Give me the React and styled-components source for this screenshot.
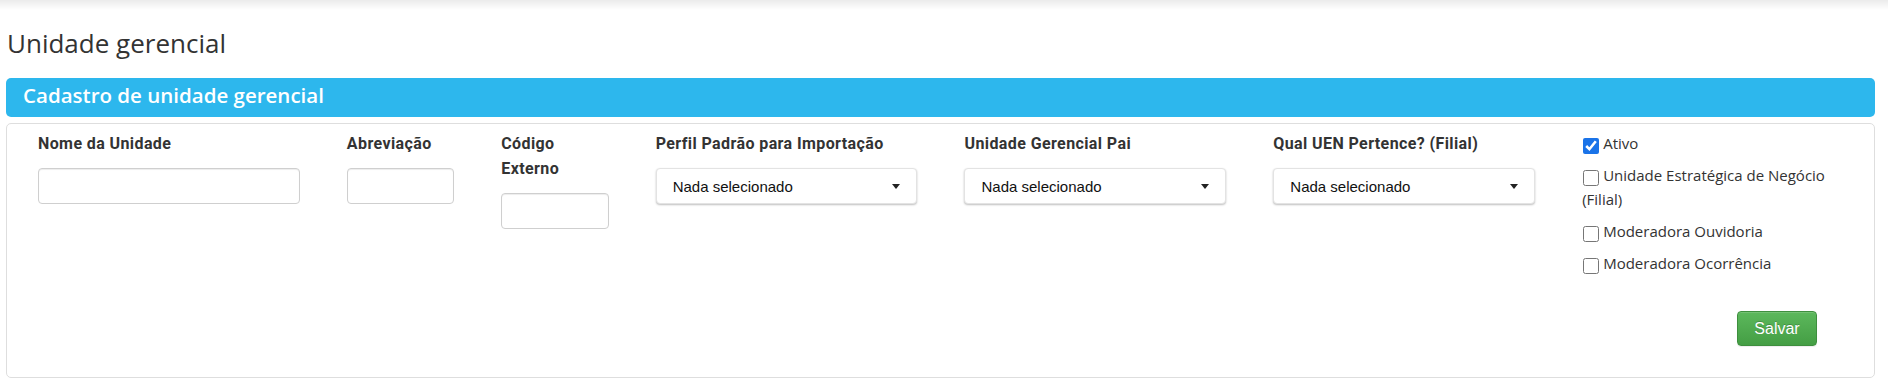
import React, { useState } from 'react';
import styled, { createGlobalStyle } from 'styled-components';

const GlobalStyle = createGlobalStyle`
  html, body {
    margin: 0;
    padding: 0;
    background: #ffffff;
  }
  body {
    font-family: "Open Sans", "Liberation Sans", sans-serif;
    color: #333;
  }
  * {
    box-sizing: border-box;
  }
`;

const TopShade = styled.div`
  height: 10px;
  background: linear-gradient(#ebebeb, #ffffff);
`;

const Page = styled.main`
  padding: 0 13px 0 6px;
`;

const PageTitle = styled.h1`
  margin: 15px 0 17px;
  padding-left: 1px;
  font-family: "Open Sans", sans-serif;
  font-weight: 400;
  font-size: 26px;
  line-height: 36px;
  color: #333;
`;

const PanelHeading = styled.div`
  height: 39px;
  padding: 0 0 4px 17px;
  background: #2db7ed;
  border-radius: 5px;
  color: #fff;
  font-family: "Open Sans", sans-serif;
  font-weight: 600;
  font-size: 20.5px;
  line-height: 35px;
`;

const Panel = styled.form`
  margin-top: 6px;
  border: 1px solid #dedede;
  border-radius: 5px;
  padding: 7px 30px 30px 31px;
  height: 255px;
`;

const FieldGrid = styled.div`
  display: grid;
  grid-template-columns: repeat(12, 1fr);
  column-gap: 47px;
  align-items: start;
`;

const Field = styled.div`
  grid-column: span ${p => p.span || 1};
  display: flex;
  flex-direction: column;
`;

const Label = styled.label`
  font-family: Roboto, "Liberation Sans", sans-serif;
  font-weight: 700;
  font-size: 16px;
  letter-spacing: 0.4px;
  line-height: 25px;
  color: #333;
  margin-bottom: 12px;
`;

const TextInput = styled.input`
  width: 100%;
  height: 36px;
  border: 1px solid #cfcfcf;
  border-radius: 4px;
  box-shadow: inset 0 1px 1px rgba(0, 0, 0, 0.075);
  padding: 6px 12px;
  font-size: 14px;
  outline: none;
`;

const SelectButton = styled.button`
  width: 100%;
  height: 36px;
  display: flex;
  align-items: center;
  justify-content: space-between;
  padding: 0 16px;
  background: #fff;
  border: 1px solid #e3e3e3;
  border-radius: 4px;
  box-shadow: 0 1px 2px rgba(0, 0, 0, 0.25);
  font-family: "Liberation Sans", Arial, sans-serif;
  font-size: 15px;
  color: #111;
  cursor: pointer;
`;

const Caret = styled.span`
  width: 0;
  height: 0;
  border-top: 5px solid #222;
  border-left: 4.5px solid transparent;
  border-right: 4.5px solid transparent;
`;

const CheckColumn = styled.div`
  grid-column: span 2;
  display: flex;
  flex-direction: column;
  gap: 8px;
`;

const CheckLabel = styled.label`
  display: block;
  font-family: "Open Sans", sans-serif;
  font-size: 15px;
  line-height: 24px;
  color: #333;
`;

const CheckBox = styled.input`
  width: 16px;
  height: 16px;
  margin: 7px 4px 0 1px;
  vertical-align: top;
  accent-color: #1a73e8;
`;

const Footer = styled.div`
  display: flex;
  justify-content: flex-end;
  padding-right: 27px;
  margin-top: 36px;
`;

const SaveButton = styled.button`
  width: 80px;
  height: 35px;
  border: 1px solid #3e8f3e;
  border-radius: 4px;
  background: linear-gradient(#5cb85c, #449e44);
  box-shadow: inset 0 1px 0 rgba(255, 255, 255, 0.15), 0 1px 1px rgba(0, 0, 0, 0.075);
  color: #fff;
  font-family: "Liberation Sans", Arial, sans-serif;
  font-size: 16px;
  text-shadow: 0 -1px 0 rgba(0, 0, 0, 0.2);
  cursor: pointer;
`;

const Select = ({ value }) => (
  <SelectButton type="button">
    <span>{value}</span>
    <Caret />
  </SelectButton>
);

const flags = [
  { id: 'ativo', text: 'Ativo', checked: true },
  { id: 'uen', text: 'Unidade Estratégica de Negócio (Filial)' },
  { id: 'ouvidoria', text: 'Moderadora Ouvidoria' },
  { id: 'ocorrencia', text: 'Moderadora Ocorrência' }
];

const App = () => {
  const [checks, setChecks] = useState(
    flags.reduce((acc, f) => ({ ...acc, [f.id]: !!f.checked }), {})
  );

  const toggle = (id) => setChecks(prev => ({ ...prev, [id]: !prev[id] }));

  return (
    <>
      <GlobalStyle />
      <TopShade />
      <Page>
        <PageTitle>Unidade gerencial</PageTitle>
        <PanelHeading>Cadastro de unidade gerencial</PanelHeading>
        <Panel onSubmit={e => e.preventDefault()}>
          <FieldGrid>
            <Field span={2}>
              <Label htmlFor="nome">Nome da Unidade</Label>
              <TextInput id="nome" type="text" />
            </Field>
            <Field>
              <Label htmlFor="abrev">Abreviação</Label>
              <TextInput id="abrev" type="text" />
            </Field>
            <Field>
              <Label htmlFor="codigo">Código Externo</Label>
              <TextInput id="codigo" type="text" />
            </Field>
            <Field span={2}>
              <Label>Perfil Padrão para Importação</Label>
              <Select value="Nada selecionado" />
            </Field>
            <Field span={2}>
              <Label>Unidade Gerencial Pai</Label>
              <Select value="Nada selecionado" />
            </Field>
            <Field span={2}>
              <Label>Qual UEN Pertence? (Filial)</Label>
              <Select value="Nada selecionado" />
            </Field>
            <CheckColumn>
              {flags.map(f => (
                <CheckLabel key={f.id}>
                  <CheckBox type="checkbox" checked={checks[f.id]} onChange={() => toggle(f.id)} />
                  {f.text}
                </CheckLabel>
              ))}
            </CheckColumn>
          </FieldGrid>
          <Footer>
            <SaveButton type="submit">Salvar</SaveButton>
          </Footer>
        </Panel>
      </Page>
    </>
  );
};

export default App;
